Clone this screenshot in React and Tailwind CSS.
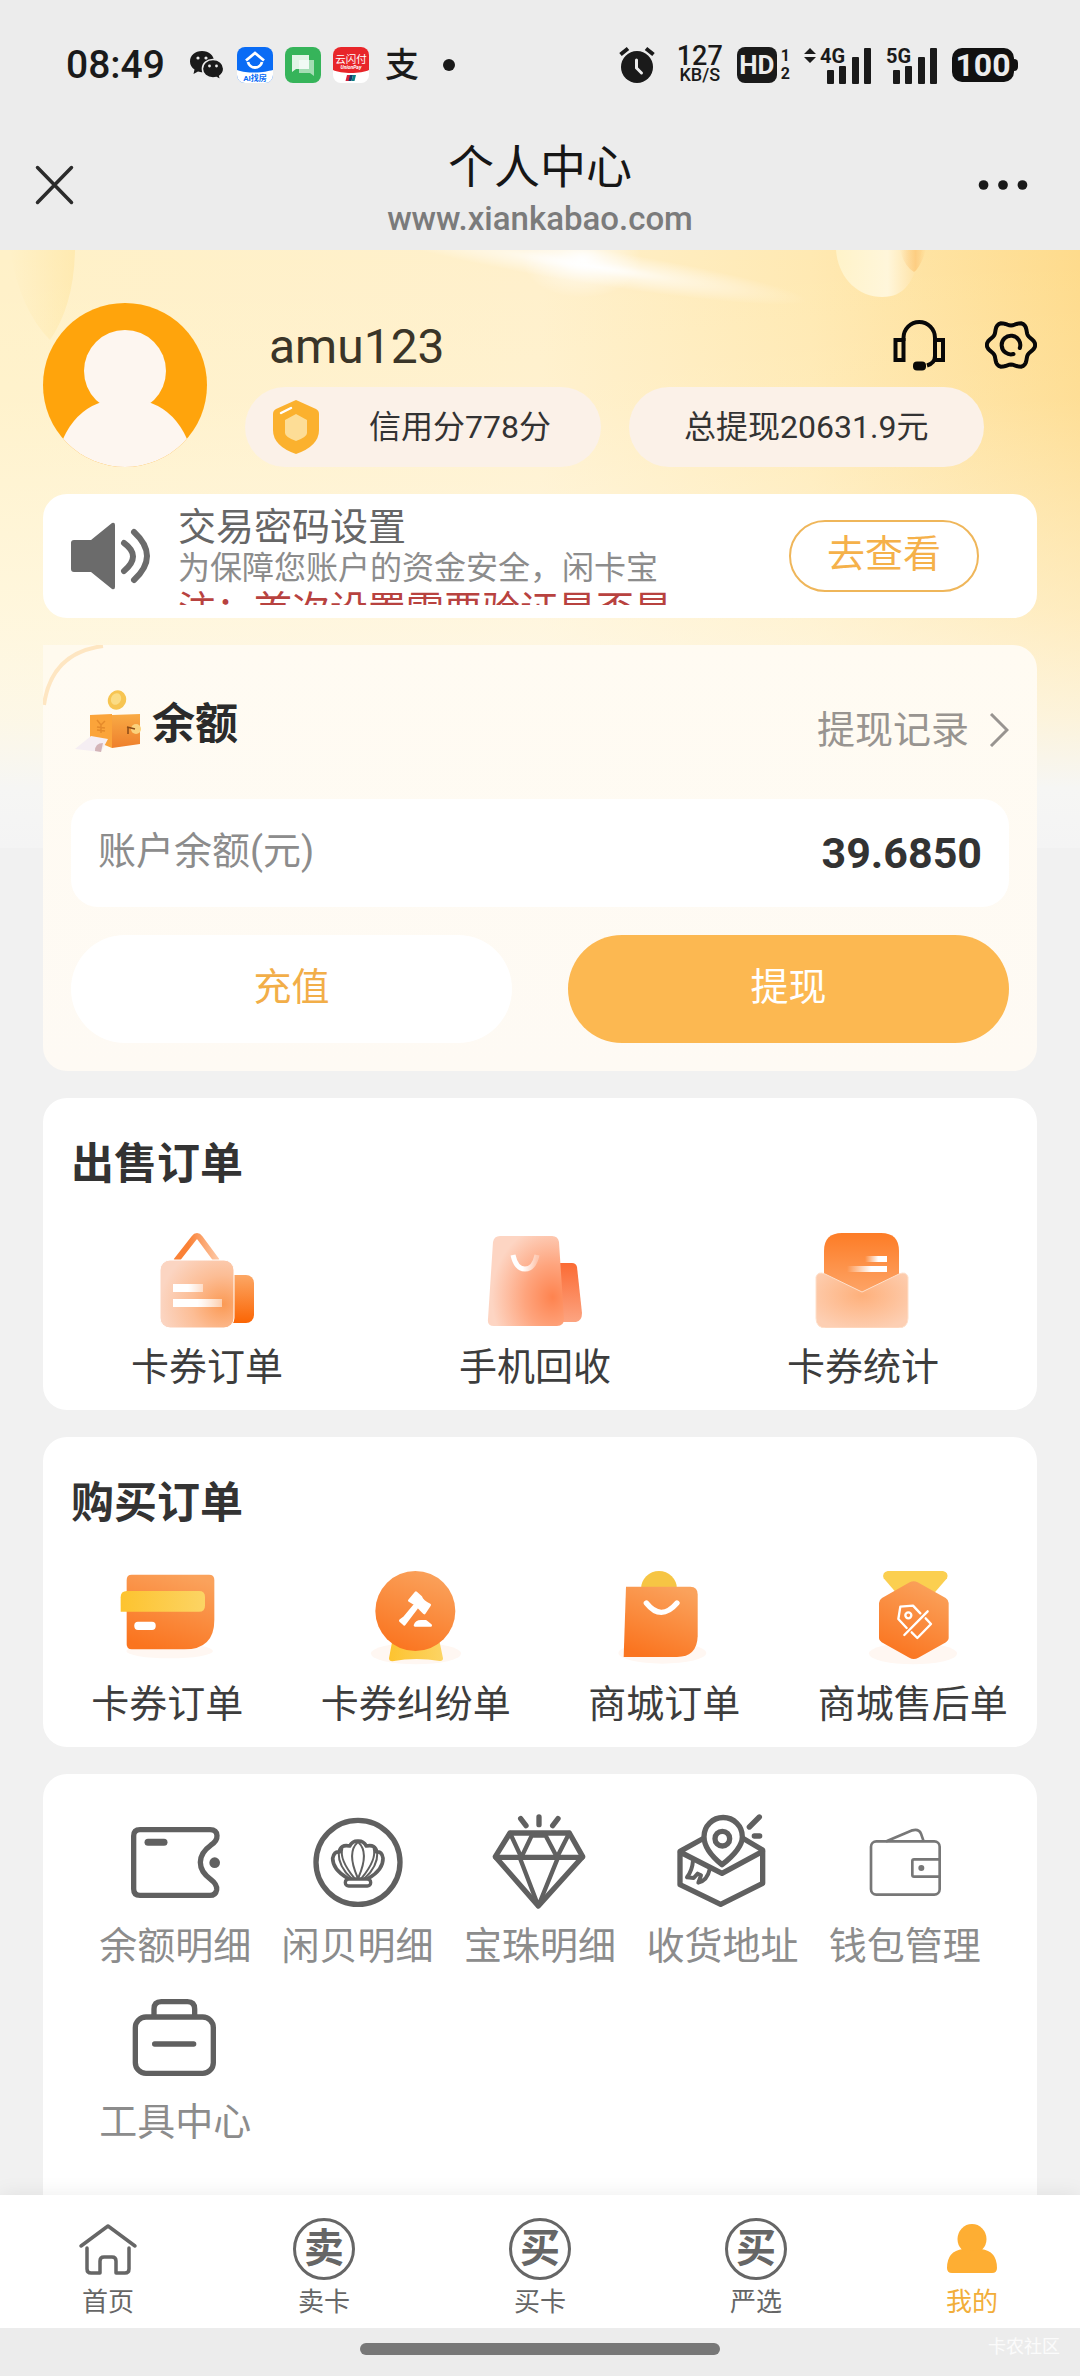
import React from 'react';

const WeChatIcon = () => (
  <svg viewBox="0 0 36 32" className="w-9 h-8" fill="#1a1a1a">
    <path d="M13 2C6 2 1 6.500 1 12.500c0 3.500 1.700 6 4.500 8L4.500 25l4.500-2.500c1.500.5 3 .7 4 .7 7 0 12-4.700 12-10.700S20 2 13 2z" />
    <path d="M24 10.500c-6 0-10.600 4-10.600 9.300S18 29 24 29c1.200 0 2.400-.2 3.500-.5l4.200 2.300-1-3.800c2.400-1.700 4-4.200 4-7.200 0-5.300-4.700-9.300-10.700-9.300z" stroke="#ececec" strokeWidth="1.500" />
    <g fill="#ececec">
      <circle cx="9" cy="9" r="1.600" />
      <circle cx="17" cy="9" r="1.600" />
      <circle cx="20.500" cy="17" r="1.400" />
      <circle cx="27.500" cy="17" r="1.400" />
    </g>
  </svg>
);

const HouseAppIcon = () => (
  <svg viewBox="0 0 36 36" className="size-9">
    <rect width="36" height="36" rx="8" fill="#0a6cf5" />
    <path d="M0 23c6 2 10 2.500 18 2.500S31 24 36 23v5a8 8 0 0 1-8 8H8a8 8 0 0 1-8-8z" fill="#fff" />
    <path d="M9 13.500 18 6l9 7.500" fill="none" stroke="#fff" strokeWidth="2.800" />
    <path d="M11 15a7.200 7.200 0 0 0 14 0" fill="none" stroke="#fff" strokeWidth="2.800" />
    <text x="18" y="34" textAnchor="middle" fontSize="8" fontWeight="700" fill="#0a6cf5">AI找房</text>
  </svg>
);

const MessagesIcon = () => (
  <svg viewBox="0 0 36 36" className="size-9">
    <rect width="36" height="36" rx="8" fill="#36b45a" />
    <path d="M14 13h15v16l-4-3H14z" fill="#fff" opacity=".55" />
    <path d="M7 8h17v14H11l-4 3z" fill="#fff" opacity=".85" />
  </svg>
);

const UnionPayIcon = () => (
  <svg viewBox="0 0 36 36" className="size-9">
    <rect width="36" height="36" rx="8" fill="#fff" />
    <path d="M0 23V8a8 8 0 0 1 8-8h20a8 8 0 0 1 8 8v15c-8 4-28 4-36 0z" fill="#e8262a" />
    <text x="18" y="15.500" textAnchor="middle" fontSize="10.500" fill="#fff">云闪付</text>
    <text x="18" y="22" textAnchor="middle" fontSize="5" fontStyle="italic" fontWeight="700" fill="#fff">UnionPay</text>
    <path d="M14 28h4l-1.500 6h-4z" fill="#d8203a" />
    <path d="M17 28h3l-1.500 6h-3z" fill="#173a6b" />
    <path d="M20 28h3l-1.500 6h-3z" fill="#0b7f86" />
  </svg>
);

const AlarmIcon = () => (
  <svg viewBox="0 0 36 38" className="mr-2 w-9 h-[38px]">
    <circle cx="18" cy="21" r="16" fill="#1a1a1a" />
    <path d="M1.500 8.500 9 2.500M34.500 8.500 27 2.500" stroke="#1a1a1a" strokeWidth="4" />
    <path d="M17.500 14v8l5 5" fill="none" stroke="#ececec" strokeWidth="3" strokeLinecap="round" />
  </svg>
);

const Signal = ({ label }) => (
  <svg viewBox="0 0 52 38" className="h-[38px] w-[52px] overflow-visible" fill="#1a1a1a">
    <text x="0" y="17" fontSize="20" fontWeight="700">{label}</text>
    <rect x="7" y="24" width="7" height="14" rx="1" />
    <rect x="19" y="20" width="7" height="18" rx="1" />
    <rect x="32" y="11" width="7" height="27" rx="1" />
    <rect x="44" y="2" width="7" height="36" rx="1" />
  </svg>
);

const StatusBar = () => (
  <div className="flex h-[130px] items-center justify-between pl-[66px] pr-[62px] text-[#1a1a1a]">
    <div className="flex items-center gap-3">
      <span className="mr-3 pt-px text-[39px] leading-none font-medium">08:49</span>
      <WeChatIcon />
      <HouseAppIcon />
      <MessagesIcon />
      <UnionPayIcon />
      <span className="ml-1 text-[34px] leading-none font-medium">支</span>
      <span className="ml-3 size-3 rounded-full bg-[#1a1a1a]" />
    </div>
    <div className="flex items-center gap-[14px]">
      <AlarmIcon />
      <div className="flex flex-col items-center font-medium">
        <span className="text-[27px] leading-[20px]">127</span>
        <span className="text-[18px] leading-[18px]">KB/S</span>
      </div>
      <div className="flex items-center gap-1">
        <span className="flex h-9 w-10 items-center justify-center rounded-lg bg-[#1a1a1a] text-[26px] leading-none font-bold text-[#ececec]">HD</span>
        <span className="flex flex-col text-[16px] leading-[18px] font-bold">
          <span>1</span>
          <span>2</span>
        </span>
      </div>
      <div className="flex items-center gap-1">
        <svg viewBox="0 0 12 38" className="w-3 h-[38px]" fill="#1a1a1a">
          <path d="M6 2l6 6H0zM6 17l6-6H0z" />
        </svg>
        <Signal label="4G" />
      </div>
      <Signal label="5G" />
      <div className="flex items-center">
        <span className="flex h-[34px] w-[62px] items-center justify-center rounded-[10px] bg-[#111] text-[32px] leading-none font-bold text-[#ececec]">100</span>
        <span className="h-3 w-1 rounded-r bg-[#111]" />
      </div>
    </div>
  </div>
);

const TitleBar = () => (
  <header className="grid h-[120px] grid-cols-[1fr_auto_1fr] items-start">
    <button type="button" aria-label="关闭" className="mt-[34px] ml-[34px] justify-self-start">
      <svg viewBox="0 0 42 42" className="size-[42px]" stroke="#2b2b2b" strokeWidth="3.500" strokeLinecap="round">
        <path d="M3.500 3.500l34 35M37.500 3.500l-34 35" />
      </svg>
    </button>
    <div className="flex flex-col items-center">
      <h1 className="pt-1 text-[46px] leading-[66px] text-[#161616]">个人中心</h1>
      <p className="text-[33px] leading-[38px] font-medium text-[#7b7b7b]">www.xiankabao.com</p>
    </div>
    <button type="button" aria-label="更多" className="mt-[34px] mr-[52px] justify-self-end">
      <svg viewBox="0 0 72 42" className="h-[42px] w-[50px]" fill="#1a1a1a">
        <circle cx="8" cy="21" r="7" />
        <circle cx="36" cy="21" r="7" />
        <circle cx="64" cy="21" r="7" />
      </svg>
    </button>
  </header>
);

// Warm backdrop behind the profile and the top of the balance card
const HeroBackground = () => (
  <svg viewBox="0 0 1080 598" preserveAspectRatio="none" aria-hidden="true" className="absolute inset-x-0 top-0 h-[598px] w-full">
    <defs>
      <linearGradient id="heroBase" x1="0" x2="1" y1="0" y2="0">
        <stop offset="0" stopColor="#fff1c8" />
        <stop offset=".5" stopColor="#fff0cb" />
        <stop offset=".75" stopColor="#ffe9b2" />
        <stop offset="1" stopColor="#fedb8c" />
      </linearGradient>
      <linearGradient id="heroFade" x1="0" x2="0" y1="0" y2="1">
        <stop offset="0" stopColor="#fffdf4" stopOpacity="0" />
        <stop offset=".25" stopColor="#fffdf4" stopOpacity=".1" />
        <stop offset=".6" stopColor="#fffcf1" stopOpacity=".5" />
        <stop offset=".78" stopColor="#fcf9ee" stopOpacity=".8" />
        <stop offset=".9" stopColor="#f6f6f4" />
        <stop offset="1" stopColor="#f4f4f4" />
      </linearGradient>
      <radialGradient id="heroGlow">
        <stop offset="0" stopColor="#fff" />
        <stop offset=".4" stopColor="#fff" stopOpacity=".5" />
        <stop offset="1" stopColor="#fff" stopOpacity="0" />
      </radialGradient>
      <linearGradient id="heroLeaf" x1="0" x2="1" y1="0" y2="0">
        <stop offset="0" stopColor="#ffe7a6" stopOpacity="0" />
        <stop offset="1" stopColor="#ffe7a6" stopOpacity=".7" />
      </linearGradient>
      <linearGradient id="heroBall" x1="0" x2="1" y1="0" y2="0">
        <stop offset="0" stopColor="#fff3c9" />
        <stop offset=".6" stopColor="#fff6da" />
        <stop offset="1" stopColor="#fedf9b" />
      </linearGradient>
      <linearGradient id="heroSpot" x1="0" x2="1" y1="0" y2="0">
        <stop offset="0" stopColor="#fdc878" stopOpacity="0" />
        <stop offset=".6" stopColor="#fdc878" stopOpacity=".8" />
        <stop offset="1" stopColor="#fdc878" stopOpacity="0" />
      </linearGradient>
    </defs>
    <rect width="1080" height="598" fill="url(#heroBase)" />
    <path d="M10 0H75Q74 55 50 90Q20 60 10 0z" fill="url(#heroLeaf)" />
    <ellipse cx="590" cy="16" rx="220" ry="18" fill="url(#heroGlow)" transform="rotate(9 590 16)" />
    <ellipse cx="582" cy="10" rx="60" ry="38" fill="url(#heroGlow)" />
    <path d="M836 0C838 28 858 47 882 47S914 30 922 0z" fill="url(#heroBall)" />
    <path d="M900 0h26q-6 18-12 22-10-6-14-22z" fill="url(#heroSpot)" />
    <rect width="1080" height="598" fill="url(#heroFade)" />
  </svg>
);

const HeadsetIcon = () => (
  <svg viewBox="0 0 52 52" className="size-[52px]" fill="none" stroke="#080808" strokeWidth="4">
    <rect x="2.500" y="21" width="8" height="20" />
    <rect x="42" y="21" width="8" height="20" />
    <path d="M10.500 22v-3a15.700 16 0 0 1 31.500 0v18q0 7-8 9.500" />
    <rect x="20" y="42.500" width="13" height="9" rx="4" fill="#080808" stroke="none" />
  </svg>
);

const gearPoints = Array.from({ length: 72 }, (_, i) => {
  const angle = (i * Math.PI) / 36;
  const radius = 21.8 + 2.4 * Math.cos(6 * angle);
  return `${(26 + radius * Math.cos(angle)).toFixed(2)},${(26 + radius * Math.sin(angle)).toFixed(2)}`;
}).join(' ');

const GearIcon = () => (
  <svg viewBox="0 0 52 52" className="size-[52px]" fill="none" stroke="#080808" strokeWidth="4">
    <polygon points={gearPoints} />
    <path d="M34.800 29A9.300 9.300 0 1 0 28.500 35" strokeLinecap="round" />
  </svg>
);

const ShieldIcon = () => (
  <svg viewBox="0 0 46 54" className="w-[46px] h-[54px]">
    <path d="M23 0l20 9q3 1.500 3 5v16q0 16-23 24Q0 46 0 30V14q0-3.500 3-5z" fill="#fbb12e" />
    <path d="M23 14l11 6v13q0 4-11 8-11-4-11-8V20z" fill="#fddd96" />
    <path d="M8 13l10-5" stroke="#fff" strokeWidth="2.500" strokeLinecap="round" />
  </svg>
);

const Avatar = () => (
  <svg viewBox="0 0 164 164" className="size-[164px] shrink-0">
    <defs>
      <clipPath id="avatarClip">
        <circle cx="82" cy="82" r="82" />
      </clipPath>
    </defs>
    <g clipPath="url(#avatarClip)">
      <rect width="164" height="164" fill="#ffa40c" />
      <circle cx="82" cy="68" r="41" fill="#fdf6f0" />
      <path d="M56 100h52q24 9 36 36v28H20v-28q12-27 36-36z" fill="#fdf6f0" />
    </g>
  </svg>
);

const Profile = () => (
  <section className="flex items-start">
    <Avatar />
    <div className="ml-[38px] flex-1">
      <div className="flex h-[84px] items-center justify-between pl-6">
        <span className="pt-1 text-[48px] leading-none text-[#3a3528]">amu123</span>
        <div className="flex items-center gap-10">
          <button type="button" aria-label="客服"><HeadsetIcon /></button>
          <button type="button" aria-label="设置"><GearIcon /></button>
        </div>
      </div>
      <div className="mr-[53px] grid grid-cols-2 gap-7 text-[32px] leading-[48px] text-[#333]">
        <div className="flex h-20 items-center gap-[50px] rounded-full bg-[#fbf1e8] pl-7">
          <ShieldIcon />
          <span>信用分778分</span>
        </div>
        <div className="flex h-20 items-center justify-center rounded-full bg-[#fbf1e8]">总提现20631.9元</div>
      </div>
    </div>
  </section>
);

const Notice = () => (
  <section className="flex h-[124px] items-center rounded-3xl bg-white pl-[27px] pr-[58px]">
    <svg viewBox="0 0 80 68" className="h-[68px] w-20 shrink-0">
      <path d="M4 18h17L42 1q3-1 3 2v62q0 3-3 2L21 50H4q-3 0-3-3V21q0-3 3-3z" fill="#6b6b6b" />
      <path d="M54 21q18 13 0 28M64 10q26 24 0 48" fill="none" stroke="#6b6b6b" strokeWidth="6" strokeLinecap="round" />
    </svg>
    <div className="ml-7 h-[98px] w-[494px] overflow-hidden text-[38px] leading-[42px] whitespace-nowrap">
      <h2 className="leading-[40px] text-[#666]">交易密码设置</h2>
      <p className="text-[32px] text-[#8c8c8c]">为保障您账户的资金安全，闲卡宝</p>
      <p className="text-[#b8423f]">注：首次设置需要验证是否是</p>
    </div>
    <button type="button" className="ml-auto h-[72px] w-[190px] rounded-full border-2 border-[#efb65a] pb-1 text-[38px] leading-none text-[#f5b14a]">
      去查看
    </button>
  </section>
);

const CoinBoxIcon = () => (
  <svg viewBox="0 0 72 66" className="h-[66px] w-[72px]">
    <defs>
      <linearGradient id="boxSide" x1="0" x2="0" y1="0" y2="1">
        <stop offset="0" stopColor="#f9ab45" />
        <stop offset="1" stopColor="#ee7f2c" />
      </linearGradient>
    </defs>
    <ellipse cx="46" cy="11" rx="9" ry="10" fill="#f7c552" transform="rotate(25 46 11)" />
    <ellipse cx="45" cy="10" rx="5" ry="6" fill="#fbdc84" transform="rotate(25 45 10)" />
    <path d="M19 26l22-1v34l-22-9z" fill="#fba43a" />
    <path d="M41 26l28-1v30l-28 4z" fill="url(#boxSide)" />
    <path d="M26 31l4 5 4-4M30 36v8M26 38l8 1M26 41l8 1" fill="none" stroke="#e58a2a" strokeWidth="1.500" />
    <path d="M20 47l17 3-7 13-26-3z" fill="#f5eef3" />
    <path d="M24 62q0-8 8-8l-2 9z" fill="#d3b4b8" />
    <circle cx="65" cy="40" r="5" fill="#fbd27c" />
    <path d="M56 38l8 2M57 38v7" stroke="#8a4a16" strokeWidth="1.500" />
  </svg>
);

const Balance = () => (
  <section className="relative rounded-3xl bg-linear-to-b from-[#fffbf2] to-[#fefaf4] px-7 pb-7">
    <svg viewBox="0 0 62 62" aria-hidden="true" className="absolute top-0 left-0 size-[62px]">
      <path d="M0 0h62Q10 6 0 62z" fill="#fffaee" />
      <path d="M1 60Q8 8 60 1" fill="none" stroke="#fee6c2" strokeWidth="4" />
    </svg>
    <div className="flex h-[154px] items-center justify-between">
      <h2 className="flex items-center gap-[9px] text-[43px] leading-none font-bold text-[#2b2b2b]">
        <CoinBoxIcon />
        <span className="pt-1">余额</span>
      </h2>
      <a href="#records" className="flex items-center gap-5 pt-4 text-[38px] leading-[48px] text-[#989490]">
        提现记录
        <svg viewBox="0 0 20 34" className="h-[34px] w-5" fill="none" stroke="#989490" strokeWidth="3">
          <path d="M2 1l16 16L2 33" />
        </svg>
      </a>
    </div>
    <div className="flex h-[108px] items-center justify-between rounded-[27px] bg-white px-[27px]">
      <span className="pb-1 text-[38px] leading-[48px] text-[#8c8c8c]">账户余额(元)</span>
      <span className="text-[43px] leading-[48px] font-bold text-[#333]">39.6850</span>
    </div>
    <div className="mt-7 grid grid-cols-2 gap-14 text-[38px] leading-[48px]">
      <button type="button" className="h-[108px] rounded-full bg-white pb-1 text-[#f2ae48]">充值</button>
      <button type="button" className="h-[108px] rounded-full bg-[#fcb851] pb-1 text-white">提现</button>
    </div>
  </section>
);

const TagIcon = () => (
  <svg viewBox="0 0 96 96" className="size-24">
    <defs>
      <linearGradient id="tagBack" x1="0" x2="0" y1="0" y2="1">
        <stop offset="0" stopColor="#fca765" />
        <stop offset="1" stopColor="#fb6504" />
      </linearGradient>
      <radialGradient id="tagFront" cx=".85" cy=".65" r=".85">
        <stop offset="0" stopColor="#fb9a55" />
        <stop offset=".5" stopColor="#fcbd95" />
        <stop offset="1" stopColor="#fbd5c2" />
      </radialGradient>
      <linearGradient id="tagHook" x1="0" x2="1" y1="0" y2="0">
        <stop offset=".3" stopColor="#fa8136" />
        <stop offset="1" stopColor="#fdc6a2" />
      </linearGradient>
      <linearGradient id="tagLine" x1="0" x2="1" y1="0" y2="0">
        <stop offset=".5" stopColor="#fff" />
        <stop offset="1" stopColor="#fff" stopOpacity=".5" />
      </linearGradient>
    </defs>
    <path d="M17 29L35 6q3-4 6 0l17 23" fill="none" stroke="url(#tagHook)" strokeWidth="6" />
    <rect x="58" y="43" width="37" height="48" rx="8" fill="url(#tagBack)" />
    <rect x="1" y="28" width="74" height="68" rx="10" fill="url(#tagFront)" stroke="#fff" strokeWidth="1" />
    <rect x="14" y="52" width="30" height="8" fill="url(#tagLine)" />
    <rect x="14" y="67" width="49" height="8" fill="url(#tagLine)" />
  </svg>
);

const PhoneBagIcon = () => (
  <svg viewBox="0 0 96 96" className="size-24">
    <defs>
      <radialGradient id="bagFront" cx=".85" cy=".68" r=".8">
        <stop offset="0" stopColor="#fe834f" />
        <stop offset=".45" stopColor="#fea47d" />
        <stop offset="1" stopColor="#fdd5c3" />
      </radialGradient>
      <linearGradient id="bagBack" x1="0" x2="0" y1="0" y2="1">
        <stop offset="0" stopColor="#fb6b34" />
        <stop offset="1" stopColor="#fca481" />
      </linearGradient>
      <linearGradient id="bagSmile" x1="0" x2="1" y1="0" y2="0">
        <stop offset=".4" stopColor="#fff" />
        <stop offset="1" stopColor="#fff" stopOpacity=".3" />
      </linearGradient>
    </defs>
    <path d="M68 31h17q4 0 5 4l5 46q0 8-6 9H68z" fill="url(#bagBack)" />
    <path d="M13 4h52q6 0 7 6l5 77q0 7-7 7H7q-7 0-6-7L6 10q1-6 7-6z" fill="url(#bagFront)" />
    <path d="M26 23q3 14 12 14t12-14" fill="none" stroke="url(#bagSmile)" strokeWidth="5" />
  </svg>
);

const EnvelopeIcon = () => (
  <svg viewBox="0 0 96 96" className="size-24">
    <defs>
      <linearGradient id="docFill" x1="0" x2="0" y1="0" y2="1">
        <stop offset="0" stopColor="#fd7c26" />
        <stop offset="1" stopColor="#fdaa70" />
      </linearGradient>
      <radialGradient id="envFill" cx=".5" cy=".4" r=".65">
        <stop offset="0" stopColor="#feb07b" />
        <stop offset="1" stopColor="#fdcfb3" />
      </radialGradient>
      <linearGradient id="lineFade" x1="0" x2="1" y1="0" y2="0">
        <stop offset="0" stopColor="#fff" stopOpacity="0" />
        <stop offset=".6" stopColor="#fff" />
      </linearGradient>
    </defs>
    <path d="M27 1h39q18 0 18 18v50H9V19Q9 1 27 1z" fill="url(#docFill)" />
    <rect x="50" y="24" width="22" height="6" fill="url(#lineFade)" />
    <rect x="32" y="34" width="40" height="6" fill="url(#lineFade)" />
    <path d="M1 45q2-6 9-3l37 18 37-18q7-3 9 3v41q0 10-10 10H11Q1 96 1 86z" fill="url(#envFill)" stroke="#fee0cb" strokeWidth="1" />
  </svg>
);

const WarmGradient = ({ id }) => (
  <defs>
    <linearGradient id={id} x1=".7" x2=".3" y1="0" y2="1">
      <stop offset="0" stopColor="#faa25c" />
      <stop offset="1" stopColor="#fa741f" />
    </linearGradient>
    <linearGradient id={`${id}Gold`} x1="0" x2="1" y1="0" y2="0">
      <stop offset="0" stopColor="#fdc32f" />
      <stop offset="1" stopColor="#fcd464" />
    </linearGradient>
  </defs>
);

const CardIcon = () => (
  <svg viewBox="238 420 288 288" className="size-24">
    <WarmGradient id="cardWarm" />
    <ellipse cx="390" cy="666" rx="130" ry="22" fill="#fff7f2" />
    <path d="M276 437H508Q524 437 524 453V572Q524 661 434 661H276Q261 661 261 646V453Q261 437 276 437Z" fill="url(#cardWarm)" />
    <path d="M262 486H478Q496 486 496 503V530Q496 548 478 548H243V505Q243 486 262 486Z" fill="url(#cardWarmGold)" />
    <rect x="284" y="578" width="64" height="25" rx="11" fill="#fff" />
  </svg>
);

const GavelIcon = () => (
  <svg viewBox="983 420 288 288" className="size-24">
    <WarmGradient id="gavelWarm" />
    <ellipse cx="1127" cy="674" rx="135" ry="32" fill="#fff7f2" />
    <path d="M1055 640H1198L1208 688Q1208 697 1198 696Q1126 684 1056 697Q1046 697 1046 688Z" fill="url(#gavelWarmGold)" />
    <circle cx="1125" cy="546" r="120" fill="url(#gavelWarm)" />
    <g fill="#fff" stroke="#fff" strokeWidth="8" strokeLinejoin="round">
      <path d="M1127 491L1142 505Q1145 515 1168 528L1152 552L1140 540Q1128 525 1107 515Z" />
      <path d="M1122 530L1129 537L1100 575L1092 586L1080 575L1092 566Z" />
      <path d="M1124 589Q1128 577 1142 577H1156L1171 589Z" />
    </g>
  </svg>
);

const ShopBagIcon = () => (
  <svg viewBox="229 420 288 288" className="size-24">
    <WarmGradient id="shopWarm" />
    <ellipse cx="368" cy="672" rx="132" ry="32" fill="#fff7f2" />
    <circle cx="358" cy="480" r="54" fill="#f6c544" />
    <path d="M259 473H452Q474 473 474 496V622Q472 684 412 684H252Z" fill="url(#shopWarm)" />
    <path d="M320 522Q364 578 412 522" fill="none" stroke="#fff" strokeWidth="16" strokeLinecap="round" />
  </svg>
);

const MedalIcon = () => (
  <svg viewBox="974 420 288 288" className="size-24">
    <WarmGradient id="medalWarm" />
    <ellipse cx="1118" cy="674" rx="132" ry="32" fill="#fff7f2" />
    <path d="M1042 426H1208Q1226 430 1220 448L1180 494H1070L1030 448Q1024 430 1042 426Z" fill="#fbcf50" />
    <path d="M1108 460Q1120 453 1132 460L1216 507Q1225 513 1225 522V628Q1225 635 1217 640L1134 686Q1120 694 1107 686L1024 640Q1016 635 1016 628V522Q1016 513 1025 507Z" fill="url(#medalWarm)" />
    <g fill="none" stroke="#fff" strokeWidth="7" strokeLinejoin="round" strokeLinecap="round">
      <path d="M1140 553L1118 530L1080 533L1074 570L1099 597" />
      <circle cx="1104" cy="559" r="9" />
      <path d="M1162 547L1092 618" />
      <path d="M1156 568L1172 585L1131 627L1114 610" />
    </g>
  </svg>
);

const line = { fill: 'none', stroke: '#606060', strokeWidth: 16, strokeLinejoin: 'round', strokeLinecap: 'round' };

const BillIcon = () => (
  <svg viewBox="261 135 288 288" className="size-24" {...line}>
    <path d="M300 182H510Q530 182 531 200Q532 216 512 229Q481 251 481 280Q481 309 512 331Q532 346 530 362Q527 379 510 379H300Q281 379 281 360V201Q281 182 300 182Z" />
    <path d="M324 220H372" strokeWidth="21" />
    <circle cx="524" cy="281" r="16" fill="#606060" stroke="none" />
  </svg>
);

const ShellIcon = () => (
  <svg viewBox="808 135 288 288" className="size-24" {...line}>
    <circle cx="952" cy="280" r="126" />
    <path strokeWidth="11" d="M921 328Q876 302 876 268Q880 246 896 249Q899 225 927 231Q936 215 952 216Q968 215 977 231Q1005 225 1008 249Q1024 246 1027 268Q1028 302 983 328" />
    <rect x="914" y="330" width="76" height="21" rx="10" strokeWidth="10" />
    <path strokeWidth="6" d="M950 324Q918 250 951 220M954 324Q986 250 953 220M940 326Q895 270 905 238M964 326Q1009 270 999 238M932 328Q893 292 894 252M972 328Q1011 292 1010 252" />
  </svg>
);

const DiamondIcon = () => (
  <svg viewBox="1356 135 288 288" className="size-24" {...line}>
    <path d="M1410 192H1588L1628 263L1495 411L1366 263Z" />
    <path d="M1368 265H1626" />
    <path strokeWidth="13" d="M1410 192L1444 265L1478 194M1514 194L1551 265L1588 192M1440 268L1495 411L1553 268M1478 200H1514" />
    <path d="M1442 149L1458 170M1497 144V167M1554 149L1538 170" />
  </svg>
);

const AddressIcon = () => (
  <svg viewBox="403 135 288 288" className="size-24" {...line}>
    <path d="M488 210L421 247V347L543 406L669 343V243L612 209M421 249L547 313L669 247" />
    <path d="M547 287C520 265 493 235 493 203A56 56 0 0 1 608 203C608 235 575 265 547 287Z" fill="#fff" />
    <circle cx="548" cy="209" r="22" />
    <path d="M629 174L659 144M644 201H660" />
    <path strokeWidth="12" d="M460 275Q458 304 442 325L462 327L474 314L484 319L476 341Q503 334 510 301" />
  </svg>
);

const WalletIcon = () => (
  <svg viewBox="950 135 288 288" className="size-24" {...line} stroke="#777" strokeWidth="8">
    <rect x="992" y="217" width="206" height="160" rx="16" />
    <path d="M1040 216L1116 184Q1136 179 1142 194L1149 214M1197 271H1121Q1116 271 1116 276V318Q1116 323 1121 323H1197" />
    <circle cx="1143" cy="297" r="9" fill="#777" stroke="none" />
  </svg>
);

const ToolboxIcon = () => (
  <svg viewBox="261 663 288 288" className="size-24" {...line}>
    <rect x="286" y="744" width="234" height="169" rx="32" />
    <path d="M342 740V720Q342 698 364 698H442Q464 698 464 720V740M344 825H461" />
  </svg>
);

const sellItems = [
  { label: '卡券订单', Icon: TagIcon },
  { label: '手机回收', Icon: PhoneBagIcon },
  { label: '卡券统计', Icon: EnvelopeIcon },
];

const buyItems = [
  { label: '卡券订单', Icon: CardIcon },
  { label: '卡券纠纷单', Icon: GavelIcon },
  { label: '商城订单', Icon: ShopBagIcon },
  { label: '商城售后单', Icon: MedalIcon },
];

const toolItems = [
  { label: '余额明细', Icon: BillIcon },
  { label: '闲贝明细', Icon: ShellIcon },
  { label: '宝珠明细', Icon: DiamondIcon },
  { label: '收货地址', Icon: AddressIcon },
  { label: '钱包管理', Icon: WalletIcon },
  { label: '工具中心', Icon: ToolboxIcon },
];

const OrderCard = ({ title, items, gridClass }) => (
  <section className="rounded-3xl bg-white pt-10 pb-4">
    <h2 className="pl-7 text-[43px] leading-[52px] font-bold text-[#333]">{title}</h2>
    <ul className={gridClass}>
      {items.map(({ label, Icon }) => (
        <li key={label}>
          <a href="#orders" className="flex flex-col items-center gap-3 text-[38px] leading-[54px] whitespace-nowrap text-[#3d3d3d]">
            <Icon />
            {label}
          </a>
        </li>
      ))}
    </ul>
  </section>
);

const tabs = [
  { label: '首页', kind: 'home' },
  { label: '卖卡', glyph: '卖' },
  { label: '买卡', glyph: '买' },
  { label: '严选', glyph: '买' },
  { label: '我的', kind: 'user' },
];

const TabIcon = ({ kind, glyph }) => {
  if (kind === 'home') {
    return (
      <svg viewBox="0 0 62 62" className="size-[62px]" fill="none" stroke="#666" strokeWidth="3.500" strokeLinecap="round" strokeLinejoin="round">
        <path d="M4 28L31 8l27 20M10 30v21q0 4 4 4h9V43q0-4 4-4h8q4 0 4 4v12h9q4 0 4-4V30" />
      </svg>
    );
  }
  if (kind === 'user') {
    return (
      <svg viewBox="0 0 62 62" className="size-[62px]" fill="#feae33">
        <ellipse cx="31" cy="21" rx="14.500" ry="15" />
        <path d="M6 50q0-17 16-19 9 4 18 0 16 2 16 19 0 5-5 5H11q-5 0-5-5z" />
      </svg>
    );
  }
  return (
    <span className="flex size-[62px] items-center justify-center rounded-full border-3 border-[#666] pb-px text-[40px] leading-none font-bold">
      {glyph}
    </span>
  );
};

const TabBar = () => (
  <nav className="relative grid h-[133px] shrink-0 grid-cols-5 bg-white pt-[23px] shadow-[0_0_20px_rgba(0,0,0,0.08)]">
    {tabs.map((tab) => (
      <a
        key={tab.label}
        href="#tab"
        className={tab.kind === 'user' ? 'flex flex-col items-center gap-1 text-[#f2ae3a]' : 'flex flex-col items-center gap-1 text-[#666]'}
      >
        <TabIcon kind={tab.kind} glyph={tab.glyph} />
        <span className="text-[26px] leading-[36px]">{tab.label}</span>
      </a>
    ))}
  </nav>
);

const App = () => (
  <div className="flex h-screen flex-col overflow-hidden bg-[#ececec] font-['Roboto','Noto_Sans_CJK_SC',sans-serif]">
    <StatusBar />
    <TitleBar />
    <main className="relative min-h-0 flex-1 overflow-hidden bg-[#f1f1f1]">
      <HeroBackground />
      <div className="relative flex flex-col gap-[27px] px-[43px] pt-[53px]">
        <Profile />
        <Notice />
        <Balance />
        <OrderCard title="出售订单" items={sellItems} gridClass="mt-[42px] mr-[10px] grid grid-cols-3" />
        <OrderCard title="购买订单" items={buyItems} gridClass="mt-10 grid grid-cols-4" />
        <section className="rounded-t-3xl bg-white px-[41px] pt-10 pb-20">
          <ul className="grid grid-cols-5 gap-y-4">
            {toolItems.map(({ label, Icon }) => (
              <li key={label}>
                <a href="#tools" className="flex flex-col items-center gap-2 text-[38px] leading-[56px] whitespace-nowrap text-[#8c8c8c]">
                  <Icon />
                  {label}
                </a>
              </li>
            ))}
          </ul>
        </section>
      </div>
    </main>
    <TabBar />
    <footer className="relative flex h-12 shrink-0 items-start justify-center bg-[#ececec] pt-[15px]">
      <div className="h-3 w-1/3 rounded-full bg-[#777]" />
      <span className="absolute top-2 right-5 text-[18px] leading-[22px] text-white/80">卡农社区</span>
    </footer>
  </div>
);

export default App;
